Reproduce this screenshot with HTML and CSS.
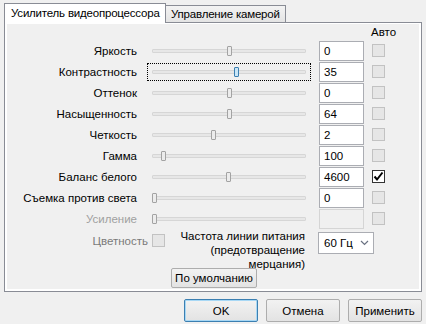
FILE: index.html
```html
<!DOCTYPE html>
<html lang="ru">
<head>
    <meta charset="UTF-8">
    <title>Свойства</title>
    <link rel="stylesheet" href="styles.css">
</head>
<body>

    <div class="dialog">
        <!-- Tabs -->
        <div class="tabs">
            <div class="tab active">Усилитель видеопроцессора</div>
            <div class="tab">Управление камерой</div>
        </div>

        <div class="panel">
            <div class="page">
                <div class="props">
                    <div class="auto-head">Авто</div>

                    <div class="label">Яркость</div>
                    <div class="slider"><div class="track"></div><div class="thumb" style="left: 79px"></div></div>
                    <div class="edit">0</div>
                    <div class="check"></div>

                    <div class="label">Контрастность</div>
                    <div class="slider focused"><div class="track"></div><div class="thumb" style="left: 86px"></div></div>
                    <div class="edit">35</div>
                    <div class="check"></div>

                    <div class="label">Оттенок</div>
                    <div class="slider"><div class="track"></div><div class="thumb" style="left: 79px"></div></div>
                    <div class="edit">0</div>
                    <div class="check"></div>

                    <div class="label">Насыщенность</div>
                    <div class="slider"><div class="track"></div><div class="thumb" style="left: 79px"></div></div>
                    <div class="edit">64</div>
                    <div class="check"></div>

                    <div class="label">Четкость</div>
                    <div class="slider"><div class="track"></div><div class="thumb" style="left: 63px"></div></div>
                    <div class="edit">2</div>
                    <div class="check"></div>

                    <div class="label">Гамма</div>
                    <div class="slider"><div class="track"></div><div class="thumb" style="left: 13px"></div></div>
                    <div class="edit">100</div>
                    <div class="check"></div>

                    <div class="label">Баланс белого</div>
                    <div class="slider"><div class="track"></div><div class="thumb" style="left: 78px"></div></div>
                    <div class="edit">4600</div>
                    <div class="check checked">
                        <svg width="11" height="11" viewBox="0 0 11 11"><polyline points="1.5,5.5 4,8.5 9.5,1.5" fill="none" stroke="#000" stroke-width="2"/></svg>
                    </div>

                    <div class="label">Съемка против света</div>
                    <div class="slider"><div class="track"></div><div class="thumb" style="left: 4px"></div></div>
                    <div class="edit">0</div>
                    <div class="check"></div>

                    <div class="label disabled">Усиление</div>
                    <div class="slider"><div class="track"></div><div class="thumb" style="left: 4px"></div></div>
                    <div class="edit empty"></div>
                    <div class="check"></div>
                </div>

                <!-- Colour and power line frequency -->
                <div class="extra">
                    <div class="chroma">
                        <span>Цветность</span>
                        <div class="check"></div>
                    </div>
                    <div class="freq-label">Частота линии питания<br>(предотвращение<br>мерцания)</div>
                    <div class="combo">
                        <span>60 Гц</span>
                        <svg width="9" height="6" viewBox="0 0 9 6"><polyline points="1,1 4.5,4.5 8,1" fill="none" stroke="#6a7282" stroke-width="1.2"/></svg>
                    </div>
                </div>

                <div class="defaults">
                    <button class="btn small">По умолчанию</button>
                </div>
            </div>
        </div>

        <div class="actions">
            <button class="btn default">OK</button>
            <button class="btn">Отмена</button>
            <button class="btn">Применить</button>
        </div>
    </div>

</body>
</html>
```

FILE: styles.css
```css
* {
    box-sizing: border-box;
}

body {
    margin: 0;
    background-color: #f0f0f0;
    font-family: 'Liberation Sans', Arial, sans-serif;
    font-size: 11.5px;
    color: #000;
}

.dialog {
    width: 422px;
    padding: 3px 0 0 4px;
}

/* Tabs */
.tabs {
    display: flex;
    align-items: flex-end;
    height: 19px;
}

.tab {
    height: 17px;
    width: 120px;
    padding-left: 5px;
    line-height: 16px;
    letter-spacing: -0.2px;
    white-space: nowrap;
    border: 1px solid #898c95;
    border-bottom: none;
    border-left: none;
    background: linear-gradient(#f3f3f3, #e4e4e4);
}

.tab.active {
    position: relative;
    z-index: 1;
    width: 162px;
    height: 20px;
    margin-bottom: -1px;
    padding-left: 6px;
    line-height: 19px;
    border-left: 1px solid #898c95;
    background: #fff;
}

.panel {
    width: 418px;
    padding: 1px 2px 2px 2px;
    border: 1px solid #898c95;
    background-color: #fff;
}

.page {
    height: 265px;
    background-color: #f0f0f0;
}

/* Property rows */
.props {
    display: grid;
    grid-template-columns: 132px 164px 45px 13px;
    grid-template-rows: 17px repeat(8, 21px) 20px;
    column-gap: 8px;
}

.auto-head {
    grid-column: 4;
    margin-left: -1px;
    padding-top: 2px;
    white-space: nowrap;
}

.label {
    grid-column: 1;
    height: 20px;
    line-height: 20px;
    padding-right: 2px;
    text-align: right;
    white-space: nowrap;
}

.label.disabled {
    color: #a0a0a0;
}

.slider {
    position: relative;
    height: 18px;
    margin-top: 1px;
    border: 1px dotted transparent;
}

.slider.focused {
    border-color: #000;
}

.track {
    height: 4px;
    margin: 6px 4px 0 4px;
    background-color: #e7e7e7;
    border: 1px solid #d6d6d6;
    border-radius: 1px;
}

.thumb {
    position: absolute;
    top: 3px;
    width: 5px;
    height: 10px;
    background-color: #ececec;
    border: 1px solid #a3a3a3;
    border-radius: 1px;
}

.slider.focused .thumb {
    background-color: #c9e6f7;
    border-color: #3c7fb1;
}

.edit {
    height: 20px;
    padding-left: 4px;
    line-height: 18px;
    background-color: #fff;
    border: 1px solid #abadb3;
}

.edit.empty {
    background-color: #f0f0f0;
    border-color: #d5d5d5;
}

.check {
    width: 13px;
    height: 13px;
    margin-top: 3px;
    background-color: #e6e6e6;
    border: 1px solid #c2c2c2;
}

.check.checked {
    background-color: #fff;
    border-color: #333;
}

.check svg {
    display: block;
}

/* Colour + frequency */
.extra {
    display: flex;
    align-items: flex-start;
}

.chroma {
    display: flex;
    justify-content: flex-end;
    align-items: center;
    gap: 4px;
    width: 166px;
    height: 13px;
    margin-top: 5px;
    padding-right: 8px;
    color: #7a7a7a;
}

.chroma .check {
    margin-top: 0;
}

.freq-label {
    width: 132px;
    line-height: 14px;
    text-align: right;
}

.combo {
    display: flex;
    justify-content: space-between;
    align-items: center;
    width: 56px;
    height: 22px;
    margin-top: 3px;
    margin-left: 13px;
    padding: 0 4px 0 5px;
    background-color: #fff;
    border: 1px solid #abadb3;
}

.defaults {
    margin-top: -3px;
    padding-left: 164px;
}

/* Buttons */
.btn {
    height: 23px;
    width: 74px;
    padding: 0;
    font-family: inherit;
    font-size: inherit;
    color: #000;
    border: 1px solid #adadad;
    border-radius: 2px;
    background: linear-gradient(#f2f2f2, #e3e3e3);
}

.btn.small {
    width: 86px;
    height: 20px;
}

.btn.default {
    border-color: #3c7fb1;
    box-shadow: inset 0 0 0 1px #a8d8f5;
}

.actions {
    display: flex;
    justify-content: flex-end;
    gap: 8px;
    margin-top: 7px;
}
```
